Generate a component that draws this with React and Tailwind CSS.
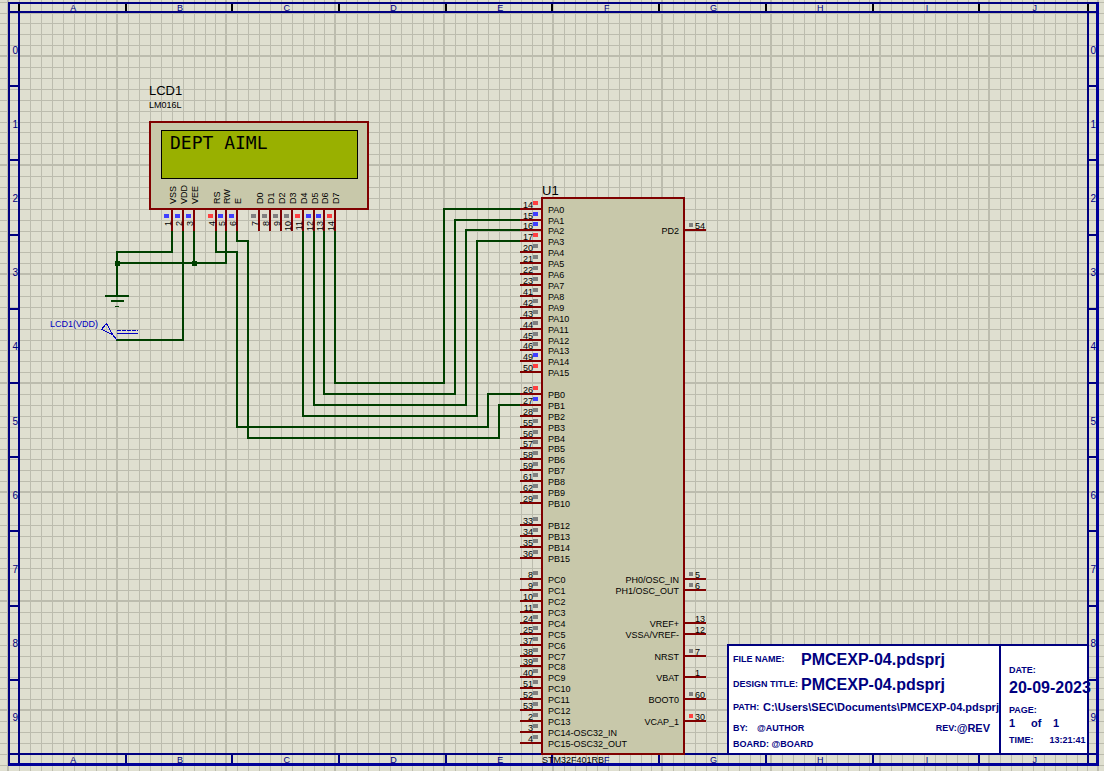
import React from "react";

const BLUE = "#4040ff";
const RED = "#ff4040";
const GRAY = "#808080";
const STATE = { b: BLUE, r: RED, g: GRAY };

const COLUMNS = ["A", "B", "C", "D", "E", "F", "G", "H", "I", "J"];
const ROWS = ["0", "1", "2", "3", "4", "5", "6", "7", "8", "9"];

// [number, label, x, state]
const LCD_PINS = [
  [1, "VSS", 172, "b"],
  [2, "VDD", 183, "b"],
  [3, "VEE", 194, "b"],
  [4, "RS", 216, "r"],
  [5, "RW", 226, "b"],
  [6, "E", 237, "b"],
  [7, "D0", 259, "g"],
  [8, "D1", 270, "g"],
  [9, "D2", 281, "g"],
  [10, "D3", 292, "g"],
  [11, "D4", 303, "r"],
  [12, "D5", 314, "b"],
  [13, "D6", 324, "b"],
  [14, "D7", 335, "r"],
];

// [number, label, y, state]
const LEFT_PINS = [
  [14, "PA0", 209, "r"],
  [15, "PA1", 220, "b"],
  [16, "PA2", 230, "b"],
  [17, "PA3", 241, "r"],
  [20, "PA4", 252, "g"],
  [21, "PA5", 263, "g"],
  [22, "PA6", 274, "g"],
  [23, "PA7", 285, "g"],
  [41, "PA8", 296, "g"],
  [42, "PA9", 307, "g"],
  [43, "PA10", 318, "g"],
  [44, "PA11", 329, "g"],
  [45, "PA12", 340, "g"],
  [46, "PA13", 350, "g"],
  [49, "PA14", 361, "b"],
  [50, "PA15", 372, "r"],
  [26, "PB0", 394, "r"],
  [27, "PB1", 405, "b"],
  [28, "PB2", 416, "g"],
  [55, "PB3", 427, "g"],
  [56, "PB4", 438, "g"],
  [57, "PB5", 448, "g"],
  [58, "PB6", 459, "g"],
  [59, "PB7", 470, "g"],
  [61, "PB8", 481, "g"],
  [62, "PB9", 492, "g"],
  [29, "PB10", 503, "g"],
  [33, "PB12", 525, "g"],
  [34, "PB13", 536, "g"],
  [35, "PB14", 547, "g"],
  [36, "PB15", 558, "g"],
  [8, "PC0", 579, "g"],
  [9, "PC1", 590, "g"],
  [10, "PC2", 601, "g"],
  [11, "PC3", 612, "g"],
  [24, "PC4", 623, "g"],
  [25, "PC5", 634, "g"],
  [37, "PC6", 645, "g"],
  [38, "PC7", 656, "g"],
  [39, "PC8", 666, "g"],
  [40, "PC9", 677, "g"],
  [51, "PC10", 688, "g"],
  [52, "PC11", 699, "g"],
  [53, "PC12", 710, "g"],
  [2, "PC13", 721, "g"],
  [3, "PC14-OSC32_IN", 732, "g"],
  [4, "PC15-OSC32_OUT", 743, "g"],
];

const RIGHT_PINS = [
  [54, "PD2", 230, "g"],
  [5, "PH0/OSC_IN", 579, "g"],
  [6, "PH1/OSC_OUT", 590, "g"],
  [13, "VREF+", 623, null],
  [12, "VSSA/VREF-", 634, null],
  [7, "NRST", 656, "g"],
  [1, "VBAT", 677, null],
  [60, "BOOT0", 699, "g"],
  [30, "VCAP_1", 721, "r"],
];

const WIRES = [
  "M172 230V252H117V296",
  "M117 263H226V230",
  "M194 230V263",
  "M183 230V340H117",
  "M216 230V252H237V427H488V394H521",
  "M237 230V241H248V438H499V405H521",
  "M303 230V416H477V241H521",
  "M314 230V405H466V230H521",
  "M324 230V394H455V220H521",
  "M335 230V383H444V209H521",
];

function SheetGrid() {
  const lines = [];
  for (let i = -11; i < 240; i++) {
    const major = i % 10 === 0;
    const w = major ? 2 : 1;
    const x = Math.round(117.3 + i * 10.9) - (w - 1);
    const y = Math.round(56.1 + i * 10.9) - (w - 1);
    lines.push(
      <rect key={"x" + i} x={x} y="0" width={w} height="100%" />,
      <rect key={"y" + i} x="0" y={y} width="100%" height={w} />
    );
  }
  return (
    <svg aria-hidden="true" className="pointer-events-none absolute inset-0 h-full w-full fill-[#bcbcae]" shapeRendering="crispEdges">
      {lines}
    </svg>
  );
}

function Lcd() {
  return (
    <g>
      <text x="149" y="95" fontSize="13">LCD1</text>
      <text x="149" y="108">LM016L</text>
      <rect x="150" y="122" width="218" height="87" fill="#c8c8aa" stroke="#800000" strokeWidth="2" shapeRendering="crispEdges" />
      <rect x="161.5" y="130.5" width="196" height="48" fill="#99b000" stroke="#000" shapeRendering="crispEdges" />
      <text x="170" y="149" fontSize="18" fontFamily="'DejaVu Sans Mono', monospace" xmlSpace="preserve">DEPT AIML</text>
      {LCD_PINS.map(([num, label, x, state]) => (
        <g key={num}>
          <path d={`M${x} 210V231`} stroke="#800000" strokeWidth="2" shapeRendering="crispEdges" />
          <rect x={x - 8} y="214" width="5" height="4" fill={STATE[state]} />
          <text transform={`translate(${x - 1} 221) rotate(-90)`} textAnchor="end">{num}</text>
          <text transform={`translate(${x + 4} 204) rotate(-90)`}>{label}</text>
        </g>
      ))}
    </g>
  );
}

function Microcontroller() {
  return (
    <g>
      <text x="542" y="195" fontSize="13">U1</text>
      <rect x="542" y="198" width="142" height="556" fill="#c8c8aa" stroke="#800000" strokeWidth="2" shapeRendering="crispEdges" />
      {LEFT_PINS.map(([num, label, y, state]) => (
        <g key={label}>
          <path d={`M520 ${y}H542`} stroke="#800000" strokeWidth="2" shapeRendering="crispEdges" />
          <rect x="533" y={y - 8} width="5" height="4" fill={STATE[state]} />
          <text x="533" y={y - 1} textAnchor="end">{num}</text>
          <text x="548" y={y + 4}>{label}</text>
        </g>
      ))}
      {RIGHT_PINS.map(([num, label, y, state]) => (
        <g key={label}>
          <path d={`M684 ${y}H706`} stroke="#800000" strokeWidth="2" shapeRendering="crispEdges" />
          {state && <rect x="689" y={y - 7} width="4" height="4" fill={STATE[state]} />}
          <text x="695" y={y - 1}>{num}</text>
          <text x="679" y={y + 4} textAnchor="end">{label}</text>
        </g>
      ))}
      <text x="542" y="763">STM32F401RB</text>
    </g>
  );
}

function Circuit() {
  return (
    <svg
      role="img"
      aria-label="Circuit schematic"
      width="1104"
      height="771"
      className="pointer-events-none absolute top-0 left-0"
      fontFamily="'Liberation Sans', Arial, sans-serif"
      fontSize="9"
      fill="#000"
    >
      <g fill="none" stroke="#004000" strokeWidth="2" strokeLinecap="square" shapeRendering="crispEdges">
        {WIRES.map((d) => (
          <path key={d} d={d} />
        ))}
      </g>
      <g fill="#004000" shapeRendering="crispEdges">
        <rect x="115" y="261" width="5" height="5" />
        <rect x="192" y="261" width="5" height="5" />
        <rect x="105" y="295" width="24" height="2" />
        <rect x="111" y="300" width="13" height="2" />
        <rect x="115" y="306" width="4" height="1" />
      </g>
      <Lcd />
      <Microcontroller />
      <g fill="none" stroke="#0000c0" shapeRendering="crispEdges">
        <path d="M106.5 323.5L101.5 329.5L112.5 334.5Z" />
        <path d="M112 334L117 340" />
        <path d="M117 330.5H138" strokeDasharray="4 1" />
        <path d="M117 333.5H138" />
      </g>
      <text x="50" y="327" fill="#0000c0">LCD1(VDD)</text>
    </svg>
  );
}

function TopRuler() {
  return (
    <div className="flex h-[7px] text-[9px] leading-[9px]">
      <div className="w-[10px] border-r-2 border-black" />
      <div className="grid flex-1 grid-cols-10">
        {COLUMNS.map((c) => (
          <div key={c} className="h-[7px] border-r-2 border-black pl-[2px] text-center last:border-r-0">{c}</div>
        ))}
      </div>
      <div className="w-[9px] border-l-2 border-black" />
    </div>
  );
}

function BottomRuler() {
  return (
    <div className="flex h-[8px] text-[9px] leading-[10px]">
      <div className="w-[10px] border-r-2 border-[#000080]" />
      <div className="grid flex-1 grid-cols-10">
        {COLUMNS.map((c) => (
          <div key={c} className="h-[8px] border-r-2 border-[#000080] pl-[2px] text-center last:border-r-0">{c}</div>
        ))}
      </div>
      <div className="w-[9px] border-l-2 border-[#000080]" />
    </div>
  );
}

function SideRuler({ width }) {
  return (
    <div className={`${width} grid grid-rows-10 border-t-2 border-[#000080] text-[10px] leading-none`}>
      {ROWS.map((r) => (
        <div key={r} className="flex items-center justify-end border-b-2 border-[#000080] pt-[3px]">{r}</div>
      ))}
    </div>
  );
}

function TitleBlock() {
  return (
    <section className="relative flex border-t-2 border-l-2 border-[#000080] bg-white text-[9px] font-bold whitespace-nowrap">
      <div className="w-[270px] pt-px pb-[2px] pl-1">
        <div className="flex h-[25px] items-center leading-[25px]">
          <span className="w-[68px]">FILE NAME:</span>
          <span className="text-[16px]">PMCEXP-04.pdsprj</span>
        </div>
        <div className="flex h-[25px] items-center leading-[25px]">
          <span className="w-[68px]">DESIGN TITLE:</span>
          <span className="text-[16px]">PMCEXP-04.pdsprj</span>
        </div>
        <div className="flex h-[21px] items-center leading-[21px]">
          <span className="w-[30px]">PATH:</span>
          <span className="text-[11px]">C:\Users\SEC\Documents\PMCEXP-04.pdsprj</span>
        </div>
        <div className="flex h-[20px] items-center pr-[9px] leading-[20px]">
          <span className="w-[24px]">BY:</span>
          <span>@AUTHOR</span>
          <span className="ml-auto">REV:</span>
          <span className="text-[11px]">@REV</span>
        </div>
        <div className="leading-[13px]">BOARD: @BOARD</div>
      </div>
      <div className="w-[88px] border-l-2 border-[#000080] pt-[17px] pl-2">
        <div className="leading-[14px]">DATE:</div>
        <div className="text-[16px] leading-[22px]">20-09-2023</div>
        <div className="pt-1 leading-[14px]">PAGE:</div>
        <div className="grid w-[66px] grid-cols-3 text-[11px] leading-[12px]">
          <span>1</span>
          <span>of</span>
          <span>1</span>
        </div>
        <div className="flex gap-4 pt-1 leading-[14px]">
          <span>TIME:</span>
          <span>13:21:41</span>
        </div>
      </div>
    </section>
  );
}

export default function App() {
  return (
    <main className="relative flex h-screen min-h-[771px] min-w-[1104px] bg-[#dfdfd0] pt-[2px] pr-[5px] pb-[5px] pl-[8px] font-['Liberation_Sans',Arial,sans-serif] text-[#000080]">
      <SheetGrid />
      <div className="relative flex flex-1 flex-col border-t-2 border-r-3 border-b-3 border-l-2 border-t-[#000080] border-r-[#000098] border-b-[#000098] border-l-[#000080]">
        <TopRuler />
        <div className="flex flex-1">
          <SideRuler width="w-[8px]" />
          <div className="flex flex-1 items-end justify-end border-2 border-[#000080]">
            <TitleBlock />
          </div>
          <SideRuler width="w-[7px]" />
        </div>
        <BottomRuler />
      </div>
      <Circuit />
    </main>
  );
}
